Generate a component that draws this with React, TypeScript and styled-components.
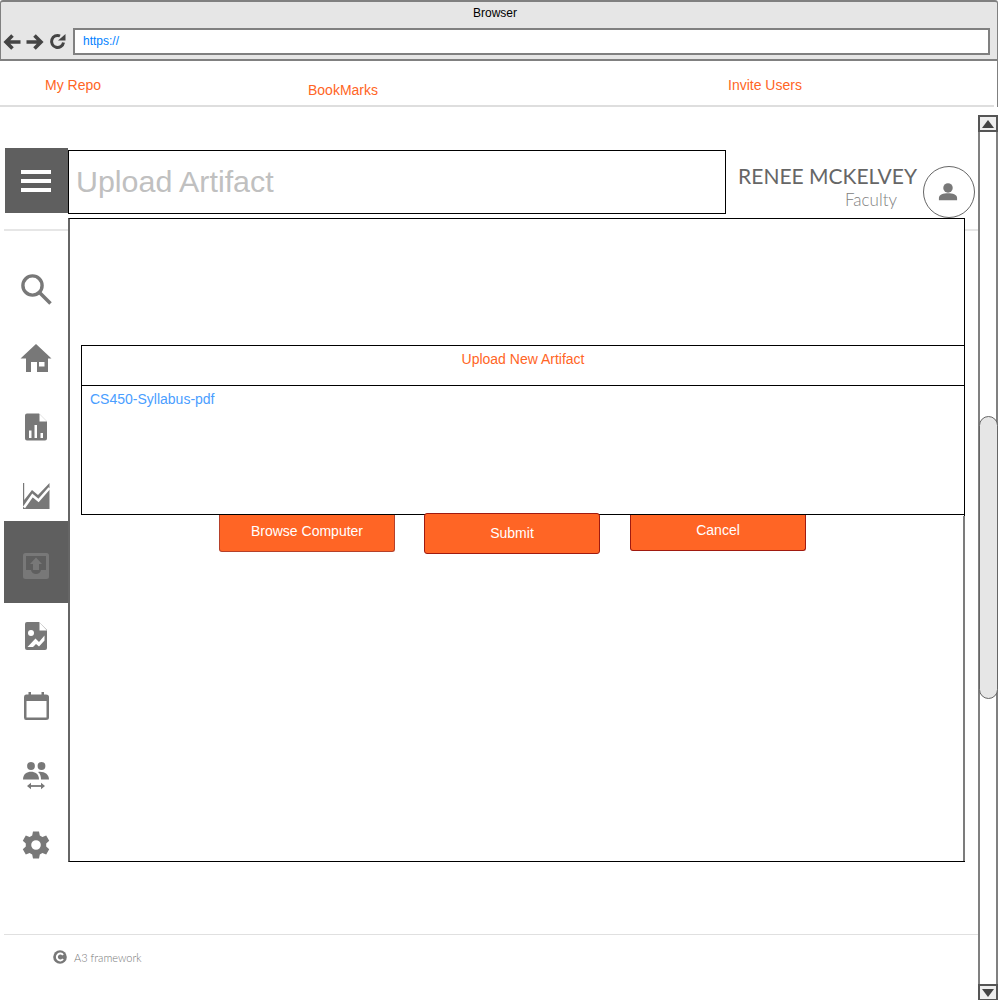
import React from "react";
import styled, { createGlobalStyle } from "styled-components";

const Global = createGlobalStyle`
  html, body { margin: 0; padding: 0; background: #fff; overflow: hidden; }
  * { box-sizing: border-box; }
`;

const Page = styled.div`
  width: 1000px;
  height: 1000px;
  display: flex;
  flex-direction: column;
  overflow: hidden;
  font-family: "Liberation Sans", Arial, sans-serif;
  background: #fff;
`;

const Chrome = styled.header`
  width: 998px;
  height: 61px;
  flex: none;
  background: #e6e6e6;
  border: 1px solid #808080;
  border-top-width: 2px;
  border-bottom-width: 2px;
  border-radius: 3px 3px 0 0;
  padding: 5px 7px 0 2px;
`;

const ChromeTitle = styled.div`
  height: 13px;
  font-size: 12px;
  line-height: 13px;
  text-align: center;
  color: #000;
  margin-left: -3px;
`;

const ChromeRow = styled.div`
  display: flex;
  align-items: center;
  margin-top: 8px;
  height: 27px;
`;

const NavIcons = styled.div`
  width: 70px;
  flex: none;
  display: flex;
  align-items: center;
  gap: 5px;
`;

const Address = styled.div`
  flex: 1;
  height: 27px;
  background: #fff;
  border: 2px solid #808080;
  padding-left: 8px;
  font-size: 12px;
  line-height: 23px;
  color: #007fff;
`;

const TopNav = styled.nav`
  width: 998px;
  height: 46px;
  flex: none;
  display: grid;
  grid-template-columns: 308px 420px 1fr;
  align-items: start;
  border-right: 1px solid #808080;
  position: relative;
`;

const NavRule = styled.div`
  height: 2px;
  background: #dedede;
  position: absolute;
  left: 0;
  right: 3px;
  bottom: 0;
`;

const NavLink = styled.a<{ $indent?: number; $drop?: number }>`
  font-size: 14px;
  line-height: 16px;
  color: #ff6525;
  margin-left: ${(p) => p.$indent ?? 0}px;
  margin-top: ${(p) => p.$drop ?? 16}px;
`;

const Work = styled.div`
  flex: 1;
  display: flex;
  min-height: 0;
`;

const Left = styled.div`
  width: 978px;
  flex: none;
  display: flex;
  flex-direction: column;
  padding-top: 41px;
`;

const HeaderRow = styled.div`
  display: flex;
  align-items: flex-start;
  height: 70px;
  padding-left: 5px;
`;

const Burger = styled.button`
  width: 63px;
  height: 65px;
  flex: none;
  background: #5f5f5f;
  border: 0;
  padding: 0 1px 0 0;
  display: flex;
  flex-direction: column;
  justify-content: center;
  align-items: center;
  gap: 5px;
`;

const BurgerBar = styled.span`
  width: 30px;
  height: 4px;
  background: #fff;
`;

const TitleBox = styled.div`
  width: 658px;
  height: 64px;
  flex: none;
  margin-top: 2px;
  border: 1px solid #000;
  padding-left: 7px;
  font-size: 30.4px;
  line-height: 61px;
  color: #c0c0c0;
`;

const User = styled.div`
  flex: 1;
  display: flex;
  justify-content: flex-end;
  padding: 18px 3px 0 0;
`;

const UserText = styled.div`
  display: flex;
  flex-direction: column;
  align-items: flex-end;
  font-family: Lato, sans-serif;
`;

const UserName = styled.div`
  font-size: 21px;
  line-height: 20px;
  color: #666;
`;

const UserRole = styled.div`
  font-size: 17px;
  line-height: 22px;
  font-weight: 300;
  color: #808080;
  margin-top: 3px;
  margin-right: 20px;
`;

const Avatar = styled.div`
  width: 52px;
  height: 52px;
  flex: none;
  margin-left: 6px;
  padding-right: 2px;
  border: 1px solid #666;
  border-radius: 50%;
  background: #fff;
  display: flex;
  align-items: center;
  justify-content: center;
  position: relative;
  z-index: 2;
`;

const Middle = styled.div`
  display: flex;
  align-items: flex-start;
  height: 716px;
`;

const Sidebar = styled.aside`
  width: 68px;
  flex: none;
  margin-top: 11px;
  height: 705px;
`;

const SideRule = styled.div`
  margin-left: 4px;
  border-top: 2px solid #e6e6e6;
  height: 25px;
`;

const SideItem = styled.div<{ $active?: boolean }>`
  height: ${(p) => (p.$active ? 82 : 69.5)}px;
  display: flex;
  align-items: center;
  justify-content: center;
  margin-left: 4px;
  padding-top: ${(p) => (p.$active ? 8 : 0)}px;
  margin-top: ${(p) => (p.$active ? -11 : 0)}px;
  margin-bottom: ${(p) => (p.$active ? -1.5 : 0)}px;
  background: ${(p) => (p.$active ? "#5f5f5f" : "transparent")};
`;

const Panel = styled.main`
  width: 897px;
  height: 644px;
  flex: none;
  border-top: 1px solid #000;
  border-bottom: 1px solid #000;
  border-left: 2px solid #666;
  background:
    linear-gradient(#000, #000) right top / 1px 297px no-repeat,
    linear-gradient(#7c7c7c, #7c7c7c) right bottom / 2px 345px no-repeat;
  padding: 126px 0 0 11px;
`;

const UploadBox = styled.section`
  width: 884px;
  border: 1px solid #000;
  position: relative;
  z-index: 1;
`;

const UploadTitle = styled.h2`
  margin: 0;
  height: 40px;
  border-bottom: 1px solid #000;
  padding-top: 5px;
  font-size: 14px;
  font-weight: 400;
  line-height: 16px;
  text-align: center;
  color: #ff6525;
`;

const FileList = styled.div`
  height: 128px;
  padding: 5px 8px;
  font-size: 14px;
  line-height: 16px;
  color: #4a9eff;
`;

const Buttons = styled.div`
  display: flex;
  align-items: flex-start;
  padding-left: 138px;
  margin-top: -2px;
  position: relative;
  z-index: 2;
`;

const Action = styled.button<{ $h: number; $top: number; $edge: string; $gap: number; $lift: number }>`
  width: 176px;
  height: ${(p) => p.$h}px;
  margin-top: ${(p) => p.$top}px;
  margin-right: ${(p) => p.$gap}px;
  padding: 0 0 ${(p) => p.$lift}px;
  background: #ff6525;
  border: 1px solid ${(p) => p.$edge};
  border-top-width: ${(p) => (p.$top ? 0 : 1)}px;
  border-radius: ${(p) => (p.$top ? "0 0 3px 3px" : "3px")};
  color: #fff;
  font-family: "Liberation Sans", Arial, sans-serif;
  font-size: 14px;
`;

const RightGutter = styled.div`
  flex: 1;
  margin-top: 11px;
  border-top: 2px solid #e6e6e6;
`;

const Footer = styled.footer`
  margin-left: 4px;
  border-top: 1px solid #e0e0e0;
  padding: 15px 0 0 49px;
  display: flex;
  align-items: center;
  gap: 7px;
  font-family: Lato, sans-serif;
  font-size: 11px;
  font-weight: 300;
  color: #777;
`;

const Scrollbar = styled.div`
  width: 20px;
  flex: none;
  margin-top: 8px;
  height: 886px;
  background: #fff;
  border-left: 2px solid #808080;
  border-right: 2px solid #808080;
  display: flex;
  flex-direction: column;
`;

const ScrollCap = styled.div`
  height: 17px;
  margin: 0 -2px;
  flex: none;
  background: #eee;
  border: 2px solid #555;
  display: flex;
  align-items: center;
  justify-content: center;
`;

const ScrollGap = styled.div<{ $h?: number }>`
  flex: ${(p) => (p.$h ? `0 0 ${p.$h}px` : 1)};
`;

const Thumb = styled.div`
  height: 283px;
  flex: none;
  margin: 0 -2px 0 -1px;
  background: #e6e6e6;
  border: 1.5px solid #666;
  border-radius: 10px;
`;

const G = "#787878";

const Icon: React.FC<{ children: React.ReactNode; size?: number }> = ({ children, size = 32 }) => (
  <svg width={size} height={size} viewBox={`0 0 ${size} ${size}`} aria-hidden="true">
    {children}
  </svg>
);

const SearchIcon = () => (
  <Icon size={34}>
    <circle cx="13.5" cy="13.5" r="9.6" fill="none" stroke={G} strokeWidth="3.4" />
    <path d="M20.5 20.5 L31.5 31.5" stroke={G} strokeWidth="3.6" />
  </Icon>
);

const HomeIcon = () => (
  <Icon>
    <path
      fillRule="evenodd"
      fill={G}
      d="M16 2 L31.5 16.5 H28 V30 H17 V20 H11 V30 H6 V16.5 H0.5 Z M19 20 V24.5 H24.5 V20 Z"
    />
  </Icon>
);

const ReportIcon = () => (
  <Icon>
    <g transform="translate(0 -1)">
      <path
        fillRule="evenodd"
        fill={G}
        d="M7 2.5 H19 L27 10.5 V27.5 Q27 29.5 25 29.5 H7 Q5 29.5 5 27.5 V4.5 Q5 2.5 7 2.5 Z M9 19.5 V27 H11.5 V19.5 Z M14.5 14 V27 H17 V14 Z M20.5 22 V27 H23 V22 Z"
      />
      <path fill="#fff" d="M19.5 3 V10.5 H27 Z" />
    </g>
  </Icon>
);

const ChartIcon = () => (
  <Icon>
    <g transform="translate(0 -1)">
      <path fill={G} d="M3 3 H4.2 V20 L12 10 L18 15 L29.5 3 V29 H3 Z" />
      <path d="M4 27.5 L12.5 15.5 L18.5 20.5 L29.5 8" fill="none" stroke="#fff" strokeWidth="2.6" />
    </g>
  </Icon>
);

const OutboxIcon = () => (
  <Icon>
    <path
      fillRule="evenodd"
      fill={G}
      d="M5.5 3 H26.5 Q29 3 29 5.5 V26.5 Q29 29 26.5 29 H5.5 Q3 29 3 26.5 V5.5 Q3 3 5.5 3 Z M6 6 V20 H11 C11.5 22.5 13.5 24 16 24 C18.5 24 20.5 22.5 21 20 H26 V6 Z"
    />
    <path fill={G} d="M16 7.5 L22 14 H19 V20 H13 V14 H10 Z" />
  </Icon>
);

const ImageFileIcon = () => (
  <Icon>
    <path fill={G} d="M7 2 H19 L27 10 V28 Q27 30 25 30 H7 Q5 30 5 28 V4 Q5 2 7 2 Z" />
    <path fill="#fff" d="M19.5 2.5 V10.5 H27 Z" />
    <circle cx="11" cy="13" r="3" fill="#fff" />
    <path fill="#fff" d="M7.5 27 L15.5 18.5 L19 22 L24.5 15.5 V20.5 L19 26.5 L16 24 L13 27 Z" />
  </Icon>
);

const CalendarIcon = () => (
  <Icon>
    <path
      fillRule="evenodd"
      fill={G}
      d="M6 4.5 H8.5 V2 H11 V4.5 H21.5 V2 H24 V4.5 H26 Q29 4.5 29 7 V27.5 Q29 30 26 30 H6 Q4 30 4 27.5 V7 Q4 4.5 6 4.5 Z M6.5 11 V27.5 H26.5 V11 Z"
    />
  </Icon>
);

const SwapGroupIcon = () => (
  <Icon>
    <g transform="translate(0 1)">
      <circle cx="11" cy="6" r="3.9" fill={G} />
      <circle cx="21.5" cy="6" r="3.9" fill={G} />
      <path fill={G} d="M3 19.5 C3 14 7 11.8 11 11.8 C15 11.8 19 14 19 19.5 Z" />
      <path fill={G} d="M18 11.9 C24 11 29 14 29 19.5 H21 C21 16 20 13.5 18 11.9 Z" />
      <path d="M9 26 H23" stroke={G} strokeWidth="1.8" />
      <path fill={G} d="M7 26 L11 22.8 V29.2 Z M25 26 L21 22.8 V29.2 Z" />
    </g>
  </Icon>
);

const GearIcon = () => (
  <Icon>
    <path
      fillRule="evenodd"
      fill={G}
      d="M13 2.5 H19 L19.8 6.4 L22.4 7.9 L26.2 6.6 L29.2 11.8 L26.2 14.4 V17.6 L29.2 20.2 L26.2 25.4 L22.4 24.1 L19.8 25.6 L19 29.5 H13 L12.2 25.6 L9.6 24.1 L5.8 25.4 L2.8 20.2 L5.8 17.6 V14.4 L2.8 11.8 L5.8 6.6 L9.6 7.9 L12.2 6.4 Z M16 11.2 A4.8 4.8 0 1 0 16 20.8 A4.8 4.8 0 1 0 16 11.2 Z"
    />
  </Icon>
);

const PersonIcon = () => (
  <svg width="22" height="20" viewBox="0 0 24 22" aria-hidden="true">
    <circle cx="12" cy="6.5" r="5.2" fill={G} />
    <path fill={G} d="M2 20 V17.5 C2 14 7 12.5 12 12.5 C17 12.5 22 14 22 17.5 V20 Z" />
  </svg>
);

const CopyMark = () => (
  <svg width="14" height="14" viewBox="0 0 14 14" aria-hidden="true">
    <circle cx="7" cy="7" r="6.8" fill={G} />
    <path d="M10 5 A3.4 3.4 0 1 0 10 9" fill="none" stroke="#fff" strokeWidth="2" />
  </svg>
);

const ArrowGlyph = styled.svg<{ $flip?: boolean }>`
  flex: none;
  transform: ${(p) => (p.$flip ? "scaleX(-1)" : "none")};
`;

const BackIcon = ({ flip }: { flip?: boolean }) => (
  <ArrowGlyph $flip={flip} width="18" height="18" viewBox="0 0 18 18" aria-hidden="true">
    <path d="M9.5 2.5 L3 9 L9.5 15.5 M4 9 H17.5" fill="none" stroke="#444" strokeWidth="3.6" />
  </ArrowGlyph>
);

const ReloadIcon = () => (
  <svg width="17" height="17" viewBox="0 0 17 17" aria-hidden="true">
    <path d="M14.5 9.5 A6 6 0 1 1 11 3" fill="none" stroke="#444" strokeWidth="3" />
    <path fill="#444" d="M9 7.5 H16.5 V1 Z" />
  </svg>
);

const Tri = ({ down }: { down?: boolean }) => (
  <svg width="12" height="8" viewBox="0 0 12 8" aria-hidden="true">
    <path fill="#444" d={down ? "M0 0 H12 L6 8 Z" : "M0 8 H12 L6 0 Z"} />
  </svg>
);

const items: { id: string; node: React.ReactNode; active?: boolean }[] = [
  { id: "search", node: <SearchIcon /> },
  { id: "home", node: <HomeIcon /> },
  { id: "report", node: <ReportIcon /> },
  { id: "chart", node: <ChartIcon /> },
  { id: "upload", node: <OutboxIcon />, active: true },
  { id: "image", node: <ImageFileIcon /> },
  { id: "calendar", node: <CalendarIcon /> },
  { id: "group", node: <SwapGroupIcon /> },
  { id: "gear", node: <GearIcon /> },
];

export default function App() {
  return (
    <Page>
      <Global />
      <Chrome>
        <ChromeTitle>Browser</ChromeTitle>
        <ChromeRow>
          <NavIcons>
            <BackIcon />
            <BackIcon flip />
            <ReloadIcon />
          </NavIcons>
          <Address>https://</Address>
        </ChromeRow>
      </Chrome>
      <TopNav>
        <NavLink $indent={45}>My Repo</NavLink>
        <NavLink $drop={21}>BookMarks</NavLink>
        <NavLink>Invite Users</NavLink>
        <NavRule />
      </TopNav>
      <Work>
        <Left>
          <HeaderRow>
            <Burger aria-label="Menu">
              <BurgerBar />
              <BurgerBar />
              <BurgerBar />
            </Burger>
            <TitleBox>Upload Artifact</TitleBox>
            <User>
              <UserText>
                <UserName>RENEE MCKELVEY</UserName>
                <UserRole>Faculty</UserRole>
              </UserText>
              <Avatar>
                <PersonIcon />
              </Avatar>
            </User>
          </HeaderRow>
          <Middle>
            <Sidebar>
              <SideRule />
              {items.map((it) => (
                <SideItem key={it.id} $active={it.active}>
                  {it.node}
                </SideItem>
              ))}
            </Sidebar>
            <Panel>
              <UploadBox>
                <UploadTitle>Upload New Artifact</UploadTitle>
                <FileList>CS450-Syllabus-pdf</FileList>
              </UploadBox>
              <Buttons>
                <Action $h={37} $top={2} $edge="#b5402a" $gap={29} $lift={5}>Browse Computer</Action>
                <Action $h={41} $top={0} $edge="#a01a10" $gap={30} $lift={2}>Submit</Action>
                <Action $h={36} $top={2} $edge="#a01a10" $gap={0} $lift={5}>Cancel</Action>
              </Buttons>
            </Panel>
            <RightGutter />
          </Middle>
          <Footer>
            <CopyMark />
            A3 framework
          </Footer>
        </Left>
        <Scrollbar>
          <ScrollCap>
            <Tri />
          </ScrollCap>
          <ScrollGap $h={284} />
          <Thumb />
          <ScrollGap />
          <ScrollCap>
            <Tri down />
          </ScrollCap>
        </Scrollbar>
      </Work>
    </Page>
  );
}
